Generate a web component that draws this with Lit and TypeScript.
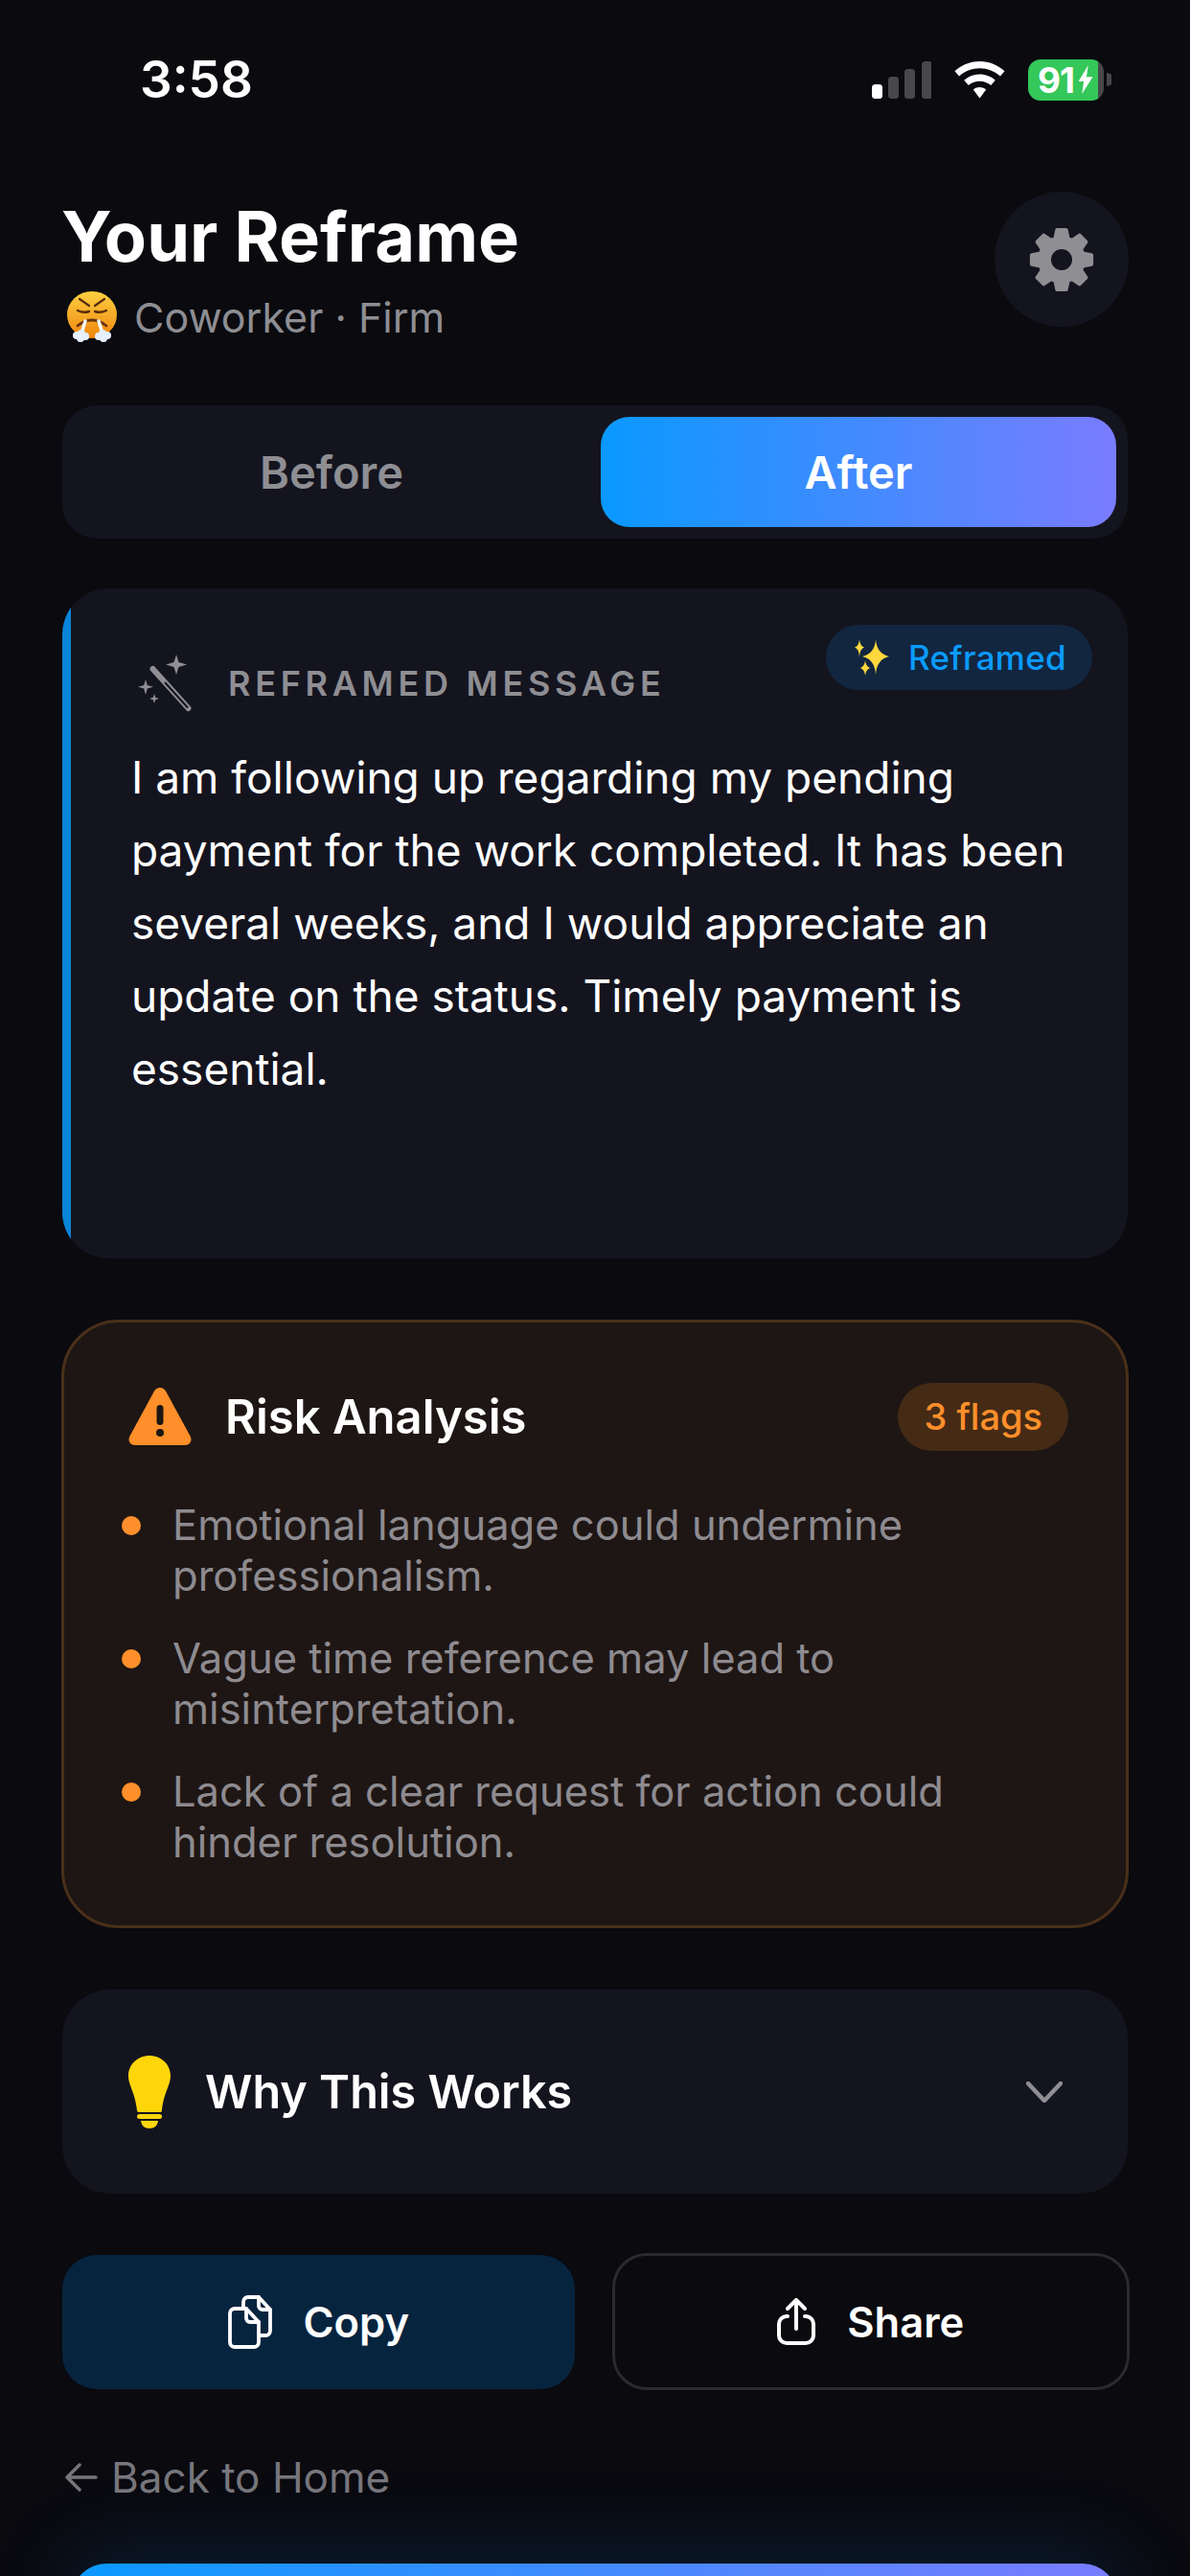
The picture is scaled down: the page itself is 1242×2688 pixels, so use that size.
import { LitElement, html, css, svg } from 'lit';
import { customElement } from 'lit/decorators.js';

const risks = [
  'Emotional language could undermine professionalism.',
  'Vague time reference may lead to misinterpretation.',
  'Lack of a clear request for action could hinder resolution.',
];

// 8 teeth cog, corners get rounded by the stroke
const gearPath = (() => {
  const pts: string[] = [];
  const n = 8;
  const p = (r: number, t: number) => `${(35 + r * Math.cos(t)).toFixed(1)} ${(35 + r * Math.sin(t)).toFixed(1)}`;
  for (let i = 0; i < n; i++) {
    const a = (i / n) * Math.PI * 2 - Math.PI / 2;
    pts.push(`${i ? 'L' : 'M'}${p(23, a - 0.29)} L${p(31.5, a - 0.15)} L${p(31.5, a + 0.15)} L${p(23, a + 0.29)}`);
  }
  return pts.join(' ') + ' Z';
})();

@customElement('app-root')
export class AppRoot extends LitElement {
  static styles = css`
    :host {
      display: block;
      width: 1242px;
      height: 2688px;
      overflow: hidden;
      background: #0a0a0f;
      color: #fff;
      font-family: Inter, 'Noto Sans', sans-serif;
    }
    .status {
      display: flex;
      align-items: center;
      height: 60px;
      padding: 53px 82px 0 146px;
    }
    .time {
      font-size: 53px;
      font-weight: 600;
      line-height: 60px;
      flex: 1;
    }
    .status-icons {
      display: flex;
      align-items: center;
      gap: 24px;
    }
    .battery {
      display: flex;
      align-items: center;
      gap: 3px;
    }
    .battery-body {
      width: 79px;
      height: 43px;
      border-radius: 13px;
      background: linear-gradient(90deg, #34c759 0 92.4%, #48484a 92.4%);
      font-size: 37px;
      font-weight: 700;
      line-height: 43px;
      letter-spacing: -1px;
      display: flex;
      align-items: center;
      gap: 4px;
      padding-left: 10px;
      box-sizing: border-box;
    }
    .page {
      padding: 0 65px;
    }
    .header {
      display: flex;
      justify-content: space-between;
      align-items: flex-start;
      margin-top: 87px;
    }
    .title {
      padding-top: 7px;
    }
    h1 {
      margin: 0 0 0 -1px;
      font-size: 72.2px;
      line-height: 80px;
      font-weight: 700;
    }
    .sub {
      display: flex;
      align-items: center;
      gap: 18px;
      margin: 16px 0 0 5px;
      font-size: 43px;
      line-height: 56px;
      color: #8e8e93;
    }
    .gear {
      width: 140px;
      height: 141px;
      margin-right: -1px;
      border-radius: 50%;
      background: #14141f;
      display: flex;
      align-items: center;
      justify-content: center;
    }
    .seg {
      display: flex;
      gap: 12px;
      margin-top: 64px;
      height: 139px;
      padding: 12px;
      box-sizing: border-box;
      border-radius: 36px;
      background: #14141f;
    }
    .seg div {
      flex: 1;
      display: flex;
      align-items: center;
      justify-content: center;
      font-size: 47px;
      font-weight: 600;
      border-radius: 30px;
      color: #8e8e93;
    }
    .seg .on {
      color: #fff;
      background: linear-gradient(90deg, #0a99ff, #7a7cff);
    }
    .msg {
      position: relative;
      overflow: hidden;
      margin-top: 52px;
      height: 699px;
      box-sizing: border-box;
      border-radius: 48px;
      background: #14141f;
      padding: 64px 40px 0 72px;
    }
    .msg::before {
      content: '';
      position: absolute;
      left: 0;
      top: 0;
      bottom: 0;
      width: 9px;
      background: #0a84d8;
    }
    .msg-head {
      display: flex;
      align-items: center;
      gap: 35px;
      height: 70px;
      padding-left: 6px;
      font-size: 36px;
      font-weight: 600;
      letter-spacing: 4.7px;
      color: #8e8e93;
    }
    .pill {
      position: absolute;
      top: 38px;
      right: 37px;
      display: flex;
      align-items: center;
      gap: 18px;
      height: 68px;
      padding: 0 27px 0 28px;
      border-radius: 34px;
      background: #122640;
      color: #0a9bff;
      font-size: 35px;
      font-weight: 500;
      letter-spacing: 0.3px;
    }
    .msg p {
      margin: 0;
      padding-top: 25px;
      font-size: 46px;
      line-height: 76px;
    }
    .risk {
      margin: 64px -1px 0;
      height: 635px;
      box-sizing: border-box;
      border: 3px solid #4a3019;
      border-radius: 60px;
      background: #1e1614;
      padding: 62px 60px 0;
    }
    .risk-head {
      display: flex;
      align-items: center;
      gap: 35px;
      height: 72px;
      padding-left: 7px;
      font-size: 49px;
      font-weight: 600;
    }
    .flags {
      margin-left: auto;
      height: 71px;
      padding: 0 27px;
      display: flex;
      align-items: center;
      border-radius: 36px;
      background: #452b15;
      color: #ff8f2b;
      font-size: 38px;
      font-weight: 500;
    }
    ul {
      list-style: none;
      margin: 51px 0 0;
      padding: 0;
      display: flex;
      flex-direction: column;
      gap: 33px;
    }
    li {
      display: flex;
      gap: 33px;
      font-size: 43.5px;
      line-height: 53px;
      color: #8e8b90;
    }
    .dot {
      flex: none;
      width: 20px;
      height: 20px;
      margin-top: 17px;
      border-radius: 50%;
      background: #ff8f2b;
    }
    .why {
      display: flex;
      align-items: center;
      margin-top: 64px;
      height: 213px;
      padding: 0 68px 0 69px;
      border-radius: 50px;
      background: #14141f;
      gap: 36px;
      font-size: 48.5px;
      font-weight: 600;
      box-sizing: border-box;
    }
    .why svg:last-child {
      margin-left: auto;
    }
    .actions {
      display: flex;
      gap: 39px;
      margin: 62px -2px 0 0;
    }
    .btn {
      flex: 1;
      height: 143px;
      box-sizing: border-box;
      display: flex;
      align-items: center;
      justify-content: center;
      gap: 33px;
      border-radius: 36px;
      font-size: 43.5px;
      font-weight: 600;
    }
    .copy {
      height: 140px;
      margin-top: 2px;
      background: #07243f;
    }
    .share {
      border: 3px solid #2a2a30;
    }
    .back {
      display: flex;
      align-items: center;
      gap: 14px;
      margin: 63px 0 0 3px;
      font-size: 44px;
      line-height: 56px;
      color: #77767c;
    }
    .cta {
      height: 60px;
      margin: 62px 11px 0 10px;
      border-radius: 36px 36px 0 0;
      background: linear-gradient(90deg, #0a99ff, #7a7cff);
      box-shadow: 0 0 90px 10px rgba(10, 140, 255, 0.16);
    }
  `;

  private signal() {
    const bars = [
      [0, 24, 15, '#fff'],
      [17, 16, 23, '#48484a'],
      [34, 8, 31, '#48484a'],
      [52, 0, 39, '#48484a'],
    ];
    return html`<svg width="62" height="39" viewBox="0 0 62 39">
      ${bars.map(([x, y, h, c]) => svg`<rect x=${x} y=${y} width="11" height=${h} rx="3.5" fill=${c}></rect>`)}
    </svg>`;
  }

  private wifi() {
    return html`<svg width="53" height="39" viewBox="0 0 53 39" fill="#fff">
      <path d="M26.5 0C16.5 0 7.5 3.8 0.5 10.2L5 15.5C10.8 10.3 18.3 7.2 26.5 7.2S42.2 10.3 48 15.5L52.5 10.2C45.5 3.8 36.5 0 26.5 0Z"></path>
      <path d="M26.5 13.5C20.3 13.5 14.6 15.8 10.2 19.7L14.8 25C17.9 22.3 22 20.7 26.5 20.7S35.1 22.3 38.2 25L42.8 19.7C38.4 15.8 32.7 13.5 26.5 13.5Z"></path>
      <path d="M26.5 27C23.9 27 21.6 27.9 19.8 29.4L26.5 38.5L33.2 29.4C31.4 27.9 29.1 27 26.5 27Z"></path>
    </svg>`;
  }

  private emoji() {
    return html`<svg width="52" height="54" viewBox="0 0 52 54">
      <defs>
        <linearGradient id="face" x1="0" y1="0" x2="0" y2="1">
          <stop offset="0" stop-color="#fcd040"></stop>
          <stop offset="1" stop-color="#f0860f"></stop>
        </linearGradient>
      </defs>
      <ellipse cx="26" cy="24.500" rx="26" ry="24.500" fill="url(#face)"></ellipse>
      <path d="M13 8l10 7M39 8l-10 7" stroke="#5a2d0c" stroke-width="2.200" stroke-linecap="round"></path>
      <path d="M11 20q6 3 12 1M41 20q-6 3-12 1" stroke="#5a2d0c" stroke-width="2.400" fill="none" stroke-linecap="round"></path>
      <path d="M11 36q15-12 30 0" stroke="#6b3410" stroke-width="2.800" fill="none" stroke-linecap="round"></path>
      <path d="M19 31L15 44M33 31L37 44" stroke="#f4f8ff" stroke-width="3.500" stroke-linecap="round"></path>
      <g fill="#e6f0ff">
        <circle cx="10" cy="46" r="4"></circle>
        <circle cx="15" cy="44" r="4"></circle>
        <circle cx="19" cy="47" r="4"></circle>
        <circle cx="14" cy="49" r="4"></circle>
        <circle cx="42" cy="46" r="4"></circle>
        <circle cx="37" cy="44" r="4"></circle>
        <circle cx="33" cy="47" r="4"></circle>
        <circle cx="38" cy="49" r="4"></circle>
      </g>
    </svg>`;
  }

  private wand() {
    return html`<svg width="60" height="60" viewBox="0 0 60 60" fill="#8e8e93">
      <path d="M41 0l2.500 8 8.500 2.500-8.500 2.500L41 21l-2.500-8L30 10.500 38.500 8Z"></path>
      <path d="M9 26l1.800 6 6.200 1.800-6.200 1.800L9 42l-1.800-6.400L1 33.800l6.200-1.800Z"></path>
      <path d="M18 41l1.200 3.800 3.800 1.200-3.800 1.200L18 51l-1.200-3.800L13 46l3.800-1.200Z"></path>
      <path d="M16.500 15l37 41" stroke="#8e8e93" stroke-width="6" stroke-linecap="round" fill="none"></path>
      <path d="M29 29l24 26.500" stroke="#14141f" stroke-width="2" fill="none"></path>
    </svg>`;
  }

  private sparkles() {
    return html`<svg width="40" height="38" viewBox="0 0 40 38" fill="#ffd83d">
      <path d="M24 0Q25 15 38 18 25 21 24 37 23 21 10 18 23 15 24 0Z"></path>
      <path d="M7 0Q7.500 7 12 8.500 7.500 10 7 18 6.500 10 2 8.500 6.500 7 7 0Z"></path>
      <path d="M13 22Q13.500 28 18 30 13.500 32 13 38 12.500 32 8 30 12.500 28 13 22Z"></path>
    </svg>`;
  }

  private copyIcon() {
    return html`<svg width="46" height="56" viewBox="0 0 46 56" fill="none" stroke="#fff" stroke-width="3.800" stroke-linejoin="round" stroke-linecap="round">
      <path d="M16 13V7a5 5 0 0 1 5-5h11l12 13v22a5 5 0 0 1-5 5h-6"></path>
      <path d="M32 2v9a4 4 0 0 0 4 4h8"></path>
      <path d="M2 19a5 5 0 0 1 5-5h12l13 14v21a5 5 0 0 1-5 5H7a5 5 0 0 1-5-5Z"></path>
      <path d="M19 14v10a4 4 0 0 0 4 4h9"></path>
    </svg>`;
  }

  private shareIcon() {
    return html`<svg width="40" height="50" viewBox="0 0 40 50" fill="none" stroke="#fff" stroke-width="4" stroke-linecap="round" stroke-linejoin="round">
      <path d="M11 19H10a8 8 0 0 0-8 8v12a8 8 0 0 0 8 8h20a8 8 0 0 0 8-8V27a8 8 0 0 0-8-8h-1"></path>
      <path d="M20 32V3M11 11l9-9 9 9"></path>
    </svg>`;
  }

  private bulb() {
    return html`<svg width="44" height="76" viewBox="0 0 44 76" fill="#ffd60a">
      <path d="M22 0C10 0 0 9 0 21c0 10 7 17 9 36 0 1.500 1 2 2 2h22c1 0 2-.5 2-2 2-19 9-26 9-36C44 9 34 0 22 0Z"></path>
      <rect x="9" y="61" width="26" height="5" rx="2.500"></rect>
      <path d="M13 68h18c-.5 5-4 8-9 8s-8.500-3-9-8Z"></path>
    </svg>`;
  }

  render() {
    return html`
      <div class="status">
        <div class="time">3:58</div>
        <div class="status-icons">
          ${this.signal()} ${this.wifi()}
          <div class="battery">
            <div class="battery-body">91<svg width="16" height="30" viewBox="0 0 16 32" fill="#fff"><path d="M11 0L0 18h6l-2 14L16 13H9Z"></path></svg></div>
            <svg width="5" height="14" viewBox="0 0 5 14"><path d="M0 0a7 7 0 0 1 0 14Z" fill="#48484a"></path></svg>
          </div>
        </div>
      </div>
      <div class="page">
        <div class="header">
          <div class="title">
            <h1>Your Reframe</h1>
            <div class="sub">${this.emoji()}<span>Coworker · Firm</span></div>
          </div>
          <div class="gear">
            <svg width="70" height="70" viewBox="0 0 70 70">
              <path d=${gearPath} fill="#8e8e93" stroke="#8e8e93" stroke-width="4" stroke-linejoin="round"></path>
              <circle cx="35" cy="35" r="11" fill="#14141f"></circle>
            </svg>
          </div>
        </div>
        <div class="seg"><div>Before</div><div class="on">After</div></div>
        <div class="msg">
          <div class="pill">${this.sparkles()}<span>Reframed</span></div>
          <div class="msg-head">${this.wand()}<span>REFRAMED MESSAGE</span></div>
          <p>I am following up regarding my pending payment for the work completed. It has been several weeks, and I would appreciate an update on the status. Timely payment is essential.</p>
        </div>
        <div class="risk">
          <div class="risk-head">
            <svg width="66" height="60" viewBox="0 0 66 60">
              <path d="M33 0c3 0 5 1.600 6.500 4.500l25 46c2.500 4.500 0 9.500-5.500 9.500H7c-5.500 0-8-5-5.500-9.500l25-46C28 1.600 30 0 33 0Z" fill="#ff8f2b"></path>
              <rect x="29.500" y="18" width="7" height="21" rx="3.500" fill="#1e1614"></rect>
              <circle cx="33" cy="47" r="4" fill="#1e1614"></circle>
            </svg>
            <span>Risk Analysis</span>
            <span class="flags">3 flags</span>
          </div>
          <ul>${risks.map((r) => html`<li><span class="dot"></span><span>${r}</span></li>`)}</ul>
        </div>
        <div class="why">
          ${this.bulb()}
          <span>Why This Works</span>
          <svg width="38" height="22" viewBox="0 0 38 22" fill="none" stroke="#8e8e93" stroke-width="4.500" stroke-linecap="round" stroke-linejoin="round"><path d="M2 2l17 18L36 2"></path></svg>
        </div>
        <div class="actions">
          <div class="btn copy">${this.copyIcon()}<span>Copy</span></div>
          <div class="btn share">${this.shareIcon()}<span>Share</span></div>
        </div>
        <div class="back">
          <svg width="34" height="30" viewBox="0 0 34 30" fill="none" stroke="#77767c" stroke-width="3.500" stroke-linecap="round" stroke-linejoin="round"><path d="M32 15H3M15 2L2 15l13 13"></path></svg>
          <span>Back to Home</span>
        </div>
        <div class="cta"></div>
      </div>
    `;
  }
}
